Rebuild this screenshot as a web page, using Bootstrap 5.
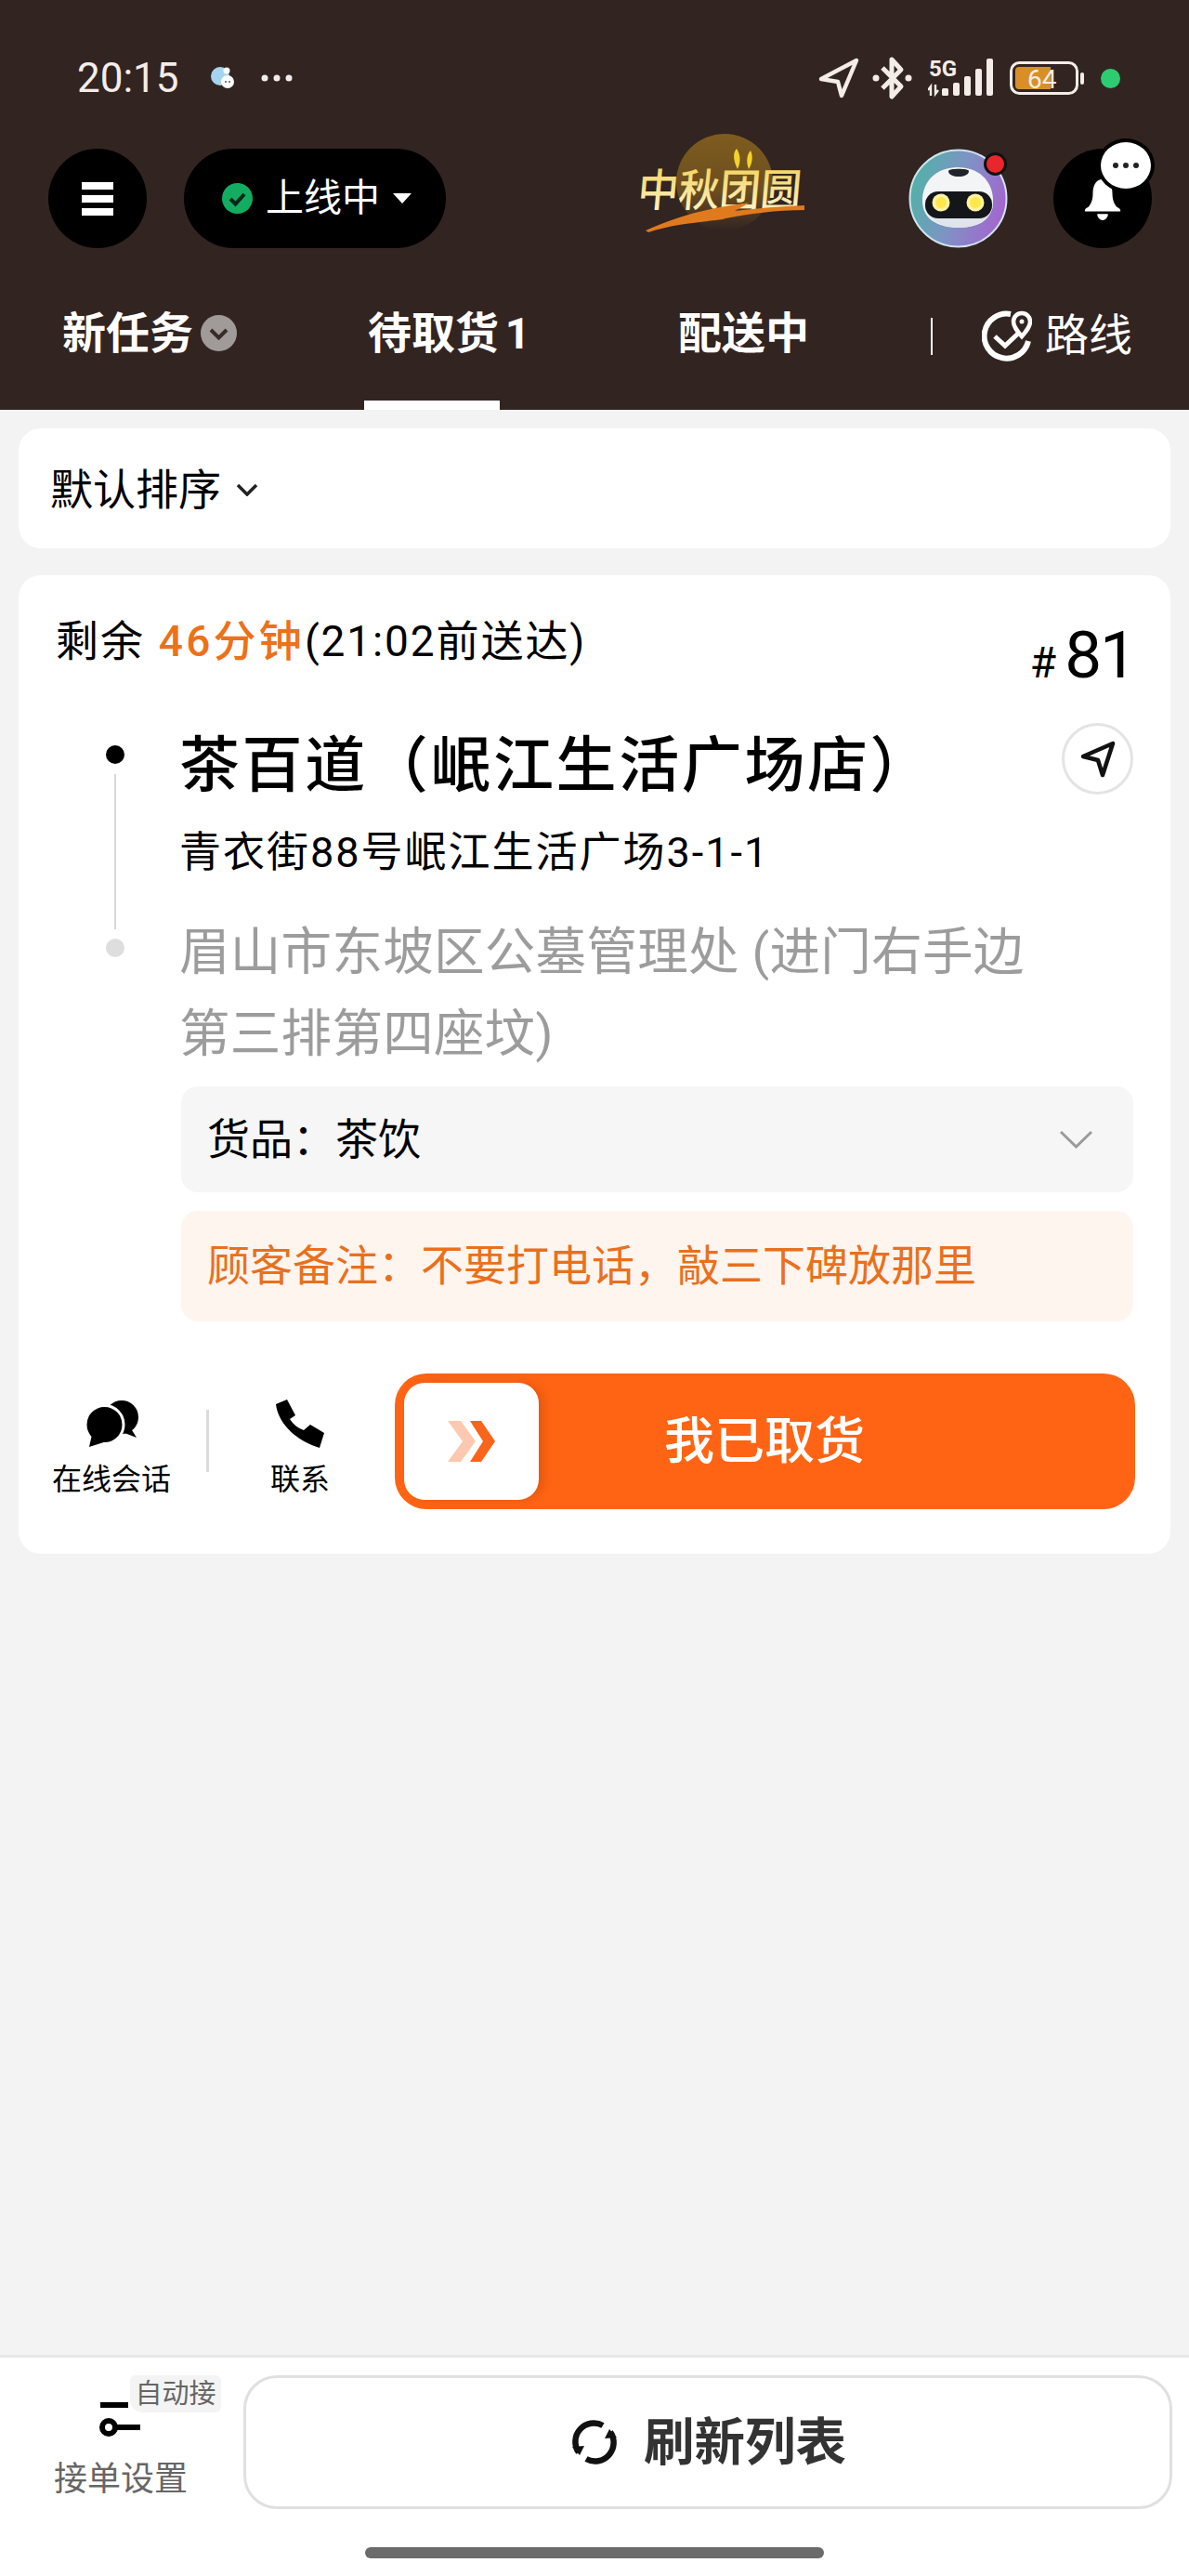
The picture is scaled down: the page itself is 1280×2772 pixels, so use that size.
<!DOCTYPE html>
<html lang="zh-CN">
<head>
  <meta charset="UTF-8">
  <title>待取货</title>
  <link href="https://cdn.jsdelivr.net/npm/bootstrap@5.3.3/dist/css/bootstrap.min.css" rel="stylesheet">
  <style>
    body { font-family: Roboto, "Noto Sans CJK SC", sans-serif; background: #f3f3f3; color: #000; overflow: hidden; }
    svg { display: block; flex: none; }

    /* 顶部 */
    .top-head { background: #322421; height: 441px; flex: none; color: #fff; }
    .stat-row { height: 60px; margin-top: 54px; padding: 0 74px 0 83px; color: #f3ece8; }
    .stat-time { font-size: 44px; line-height: 60px; width: 143px; }
    .stat-more { margin-left: 29px; }
    .stat-dot { width: 21px; height: 21px; background: #2ecc71; border-radius: 50%; margin-left: 16px; }
    .bar-row { height: 107px; margin-top: 46px; padding-left: 52px; }
    .round-btn { width: 106px; height: 107px; border-radius: 50%; background: #000; flex: none; }
    .status-pill { width: 282px; height: 107px; margin-left: 40px; border-radius: 54px; background: #000; padding-left: 41px; font-size: 41px; }
    .status-pill span { margin-left: 14px; line-height: 1; }
    .status-pill svg:last-child { margin-left: 14px; }
    .logo-box { width: 182px; height: 107px; margin-left: 204px; margin-top: -16px; margin-bottom: 16px; overflow: visible; }
    .robot-box { margin-left: 112px; position: relative; }
    .robot-dot { position: absolute; top: 4px; right: 1px; width: 25px; height: 25px; background: #e8262b; border: 3px solid #111; border-radius: 50%; }
    .bell-btn { margin-left: 49px; position: relative; }
    .bell-bubble { position: absolute; top: -11px; right: -3px; width: 54px; height: 50px; background: #fff; border: 4px solid #000; border-radius: 50%; box-sizing: content-box; }

    .tab-row { height: 174px; padding-left: 67px; font-size: 47px; font-weight: 700; line-height: 1; }
    .tab-one { padding-top: 8px; flex: none; white-space: nowrap; }
    .tab-down { margin-left: 8px; }
    .tab-active { width: 146px; margin-left: 137px; padding-left: 4px; box-shadow: inset 0 -10px 0 #fff; word-spacing: -5px; }
    .tab-send { margin-left: 192px; }
    .tab-sep { width: 2px; height: 40px; background: #fff; margin-left: 131px; margin-top: 8px; }
    .tab-route { margin-left: 53px; font-weight: 400; font-size: 47px; padding-top: 12px; }
    .tab-route span { margin-left: 14px; }

    /* 内容 */
    .list-area { padding: 20px 20px 0; }
    .white-box { background: #fff; border-radius: 24px; }
    .sort-box { height: 129px; padding: 3px 0 0 34px; font-size: 46px; }
    .sort-box svg { margin-left: 16px; }
    .task-box { height: 1053px; margin-top: 29px; padding: 41px 40px 48px 41px; }
    .left-time { font-size: 46px; line-height: 60px; letter-spacing: 1.9px; margin-left: -1px; }
    .left-time b { color: #ed7118; font-weight: 500; margin-left: 15px; letter-spacing: 3.2px; }
    .task-no { font-size: 71px; line-height: 90px; margin-right: -2px; letter-spacing: -2px; }
    .task-no small { font-size: 46px; margin-right: 9px; letter-spacing: 0; }
    .road-col { width: 126px; margin-right: 6px; padding-top: 24px; flex: none; }
    .road-dot { width: 20px; height: 20px; border-radius: 50%; background: #000; }
    .road-dot.far { background: #dedede; margin-top: 10px; }
    .road-line { width: 2px; height: 167px; background: #d8d8d8; margin-top: 11px; }
    .addr-col { width: 1027px; }
    .shop-name { font-size: 65px; line-height: 92px; font-weight: 500; margin: 0 0 -4px; white-space: nowrap; letter-spacing: 2.6px; }
    .nav-circle { width: 77px; height: 77px; border: 3px solid #e4e4e4; border-radius: 50%; flex: none; }
    .shop-addr { font-size: 45px; line-height: 60px; margin: 22px 0 0; white-space: nowrap; letter-spacing: 2px; }
    .to-addr { font-size: 54.5px; line-height: 88px; color: #9c9c9c; margin: 32px 0 0; letter-spacing: .3px; }
    .goods-box { height: 114px; margin: 13px 0 0 2px; padding: 0 43px 0 28px; background: #f6f6f6; border-radius: 18px; font-size: 46px; }
    .note-box { height: 119px; margin: 20px 0 0 2px; padding-left: 28px; background: #fff5ef; border-radius: 18px; font-size: 46px; color: #e9701d; }
    .act-row { height: 146px; margin-top: 56px; margin-left: -6px; }
    .act-item { padding-top: 28px; font-size: 32px; line-height: 40px; flex: none; }
    .act-item span { margin-top: 14px; }
    .act-chat { width: 130px; }
    .act-tel { width: 80px; margin-left: 58px; }
    .act-div { width: 3px; height: 67px; background: #dcdcdc; margin: 39px 0 0 37px; flex: none; }
    .slide-btn { margin: 0 -2px 0 62px; flex: 1; height: 146px; background: #ff6414; border-radius: 34px; padding-left: 10px; color: #fff; font-size: 54px; font-weight: 500; }
    .slide-knob { width: 145px; height: 126px; background: #fff; border-radius: 22px; box-shadow: 6px 0 10px rgba(190, 70, 0, .35); flex: none; }
    .slide-btn span { margin-left: 135px; }

    /* 底部 */
    .foot-bar { height: 238px; flex: none; background: #fff; border-top: 3px solid #e8e8e8; position: relative; }
    .foot-main { height: 166px; padding-top: 19px; }
    .set-col { width: 262px; flex: none; position: relative; font-size: 36px; color: #666; }
    .set-col svg { margin: 29px 0 0 105px; }
    .set-col .set-label { display: block; margin: 21px 0 0 58px; line-height: 48px; }
    .auto-tag { position: absolute; left: 140px; top: 0; width: 98px; height: 40px; background: #f4f4f4; font-size: 29px; line-height: 40px; text-align: center; border-radius: 6px 6px 6px 14px; color: #666; }
    .fresh-btn { width: 1000px; height: 144px; border: 3px solid #e0e0e0; border-radius: 36px; background: #fff; font-size: 54.500px; font-weight: 700; color: #333; padding: 0 0 0 350px; }
    .fresh-btn span { margin-left: 28px; line-height: 1; }
    .home-bar { width: 494px; height: 12px; background: #6b6b6b; border-radius: 6px; margin: 38px auto 0; }
  </style>
</head>
<body>
  <div class="vh-100 d-flex flex-column">

    <!-- 状态栏 + 顶部栏 -->
    <header class="top-head">
      <div class="stat-row d-flex align-items-center">
        <div class="stat-time">20:15</div>
        <svg width="26" height="24" viewBox="0 0 26 24"><circle cx="11" cy="10" r="10" fill="#a6d4ee"/><circle cx="19" cy="16" r="7" fill="#fff"/><circle cx="18" cy="4" r="3.5" fill="#fff"/><circle cx="17" cy="16" r="1" fill="#555"/><circle cx="21" cy="16" r="1" fill="#555"/></svg>
        <svg class="stat-more" width="34" height="8" viewBox="0 0 34 8" fill="#eee"><circle cx="4" cy="4" r="3.5"/><circle cx="17" cy="4" r="3.5"/><circle cx="30" cy="4" r="3.5"/></svg>
        <div class="ms-auto d-flex align-items-center">
          <svg width="44" height="46" viewBox="0 0 44 46" fill="none" stroke="#f3ece8" stroke-width="4.5" stroke-linejoin="round"><path d="M3 24 41 4 25 42 21 27z"/></svg>
          <svg style="margin-left:14px" width="44" height="48" viewBox="0 0 44 48" fill="none" stroke="#f3ece8" stroke-width="5" stroke-linejoin="round"><path d="M11 13 31 33 21 44V4L31 15 11 35"/><circle cx="4" cy="24" r="3.5" fill="#f3ece8" stroke="none"/><circle cx="39" cy="24" r="3.5" fill="#f3ece8" stroke="none"/></svg>
          <svg style="margin-left:16px" width="74" height="50" viewBox="0 -4 74 50">
            <text x="1" y="19" font-family="Roboto" font-weight="700" font-size="24" fill="#f3ece8">5G</text>
            <g transform="translate(0 -3)">
              <path d="M3 43V33L0 37M8 31V41L11 37" fill="none" stroke="#f3ece8" stroke-width="2.4"/>
              <g fill="#f3ece8"><rect x="15" y="35" width="7" height="8" rx="1.5"/><rect x="27" y="29" width="7" height="14" rx="2"/><rect x="39" y="22" width="7" height="21" rx="2"/><rect x="51" y="14" width="7" height="29" rx="2"/><rect x="63" y="3" width="7" height="40" rx="2"/></g>
            </g>
          </svg>
          <svg style="margin-left:14px" width="82" height="36" viewBox="0 0 82 36">
            <rect x="1.5" y="1.5" width="71" height="33" rx="9" fill="none" stroke="#f3ece8" stroke-width="3"/>
            <path d="M6 10a4 4 0 0 1 4-4H44V30H10a4 4 0 0 1-4-4z" fill="#d98f25"/>
            <text x="19" y="29" font-family="Roboto" font-size="28" fill="#f5eee8">64</text>
            <rect x="76" y="12" width="4" height="13" rx="2" fill="#f3ece8"/>
          </svg>
          <div class="stat-dot"></div>
        </div>
      </div>

      <div class="bar-row d-flex align-items-center">
        <div class="round-btn d-flex align-items-center justify-content-center">
          <svg width="34" height="36" viewBox="0 0 34 36" fill="#fff"><rect width="34" height="8"/><rect y="14" width="34" height="8"/><rect y="28" width="34" height="8"/></svg>
        </div>
        <div class="status-pill d-flex align-items-center">
          <svg width="33" height="33" viewBox="0 0 33 33"><circle cx="16.5" cy="16.5" r="16.5" fill="#12ad60"/><path d="M9 17l5.5 5.500L24 12" fill="none" stroke="#06251a" stroke-width="4"/></svg>
          <span>上线中</span>
          <svg width="20" height="11" viewBox="0 0 20 11" fill="#fff"><path d="M0 0H20L10 11z"/></svg>
        </div>
        <svg class="logo-box" viewBox="0 0 182 107">
          <defs>
            <linearGradient id="moon" x1="0" y1="0" x2="0" y2="1"><stop offset="0" stop-color="#7f5c1e"/><stop offset=".6" stop-color="#6b4d1f"/><stop offset="1" stop-color="#322421"/></linearGradient>
            <linearGradient id="gold" x1="0" y1="0" x2="0" y2="1"><stop offset="0" stop-color="#f2cb45"/><stop offset="1" stop-color="#fff8d8"/></linearGradient>
          </defs>
          <circle cx="96" cy="52" r="52" fill="url(#moon)"/>
          <path d="M110 38c-5-10-5-18-1-22 4 6 5 14 1 22zM122 38c-3-8-2-16 2-20 3 6 2 14-2 20z" fill="#f4d22c"/>
          <text x="0" y="78" transform="skewX(-5) translate(8 0)" font-family="Noto Sans CJK SC" font-weight="500" font-size="48" textLength="176" lengthAdjust="spacingAndGlyphs" fill="url(#gold)">中秋团圆</text>
          <path d="M11 104C50 86 90 78 123 74l-16 9c25-3 50-5 75-6v5c-30 0-60 4-85 9l-3 1C70 95 40 97 14 106z" fill="#e07a1e"/>
        </svg>
        <div class="robot-box">
          <svg width="107" height="107" viewBox="0 0 107 107">
            <defs><linearGradient id="ring" x1="0" y1=".3" x2="1" y2=".6"><stop offset="0" stop-color="#4fb3a8"/><stop offset=".5" stop-color="#7e93c4"/><stop offset="1" stop-color="#a564cf"/></linearGradient></defs>
            <circle cx="53.500" cy="53.500" r="52" fill="url(#ring)" stroke="#cfe4ec" stroke-width="2"/>
            <path d="M53 20c22 0 37 14 38 34 1 20-12 31-37 31S14 74 15 54c1-20 16-34 38-34z" fill="#f2f4f6"/>
            <path d="M17 62c3 14 18 23 37 23s34-9 37-23" fill="#dfe5ea"/>
            <rect x="18" y="46" width="72" height="29" rx="14" fill="#14161a"/>
            <path d="M43 24c0-3 22-3 22 0 0 8-22 8-22 0z" fill="#20242a"/>
            <circle cx="35" cy="58" r="9.500" fill="#fff2a0"/><circle cx="35" cy="58" r="6" fill="#ffe94a"/>
            <circle cx="72" cy="58" r="9.500" fill="#fff2a0"/><circle cx="72" cy="58" r="6" fill="#ffe94a"/>
          </svg>
          <div class="robot-dot"></div>
        </div>
        <div class="round-btn bell-btn d-flex align-items-center justify-content-center">
          <svg style="margin-top:2px" width="42" height="44" viewBox="0 0 42 46" fill="#fff"><path d="M21 0c-8 0-11 8-11 16 0 7-2 12-5 15-2 1-4 2-4 4v1h40v-1c0-2-2-3-4-4-3-3-5-8-5-15 0-8-3-16-11-16z"/><path d="M15 39h12c0 4-3 7-6 7s-6-3-6-7z"/></svg>
          <div class="bell-bubble d-flex align-items-center justify-content-center">
            <svg width="28" height="6" viewBox="0 0 28 6" fill="#222"><circle cx="3" cy="3" r="3"/><circle cx="14" cy="3" r="3"/><circle cx="25" cy="3" r="3"/></svg>
          </div>
        </div>
      </div>

      <nav class="tab-row d-flex">
        <div class="tab-one d-flex align-items-center">新任务
          <svg class="tab-down" width="39" height="39" viewBox="0 0 39 39"><circle cx="19.500" cy="19.500" r="19.500" fill="#a09a98"/><path d="M11 16l8.500 8.500L28 16" fill="none" stroke="#3a2b28" stroke-width="4"/></svg>
        </div>
        <div class="tab-one tab-active d-flex align-items-center">待取货 1</div>
        <div class="tab-one tab-send d-flex align-items-center">配送中</div>
        <div class="tab-one d-flex align-items-center"><div class="tab-sep"></div></div>
        <div class="tab-one tab-route d-flex align-items-center">
          <svg width="54" height="58" viewBox="0 0 54 58" fill="none" stroke="#fff" stroke-width="6"><path d="M31 7A24 24 0 1 0 50 36"/><path d="M14 31l11 10 16-15" stroke-width="5"/><path d="M43 31c-6-7-9-11-9-16a9 9 0 0 1 18 0c0 5-3 9-9 16z" stroke-width="4.500"/><circle cx="43" cy="15" r="2.500" fill="#fff" stroke="none"/></svg>
          <span>路线</span>
        </div>
      </nav>
    </header>

    <main class="list-area flex-grow-1">
      <div class="white-box sort-box d-flex align-items-center">
        默认排序
        <svg width="24" height="14" viewBox="0 0 24 14" fill="none" stroke="#222" stroke-width="3.500"><path d="M2 2l10 10L22 2"/></svg>
      </div>

      <section class="white-box task-box">
        <div class="d-flex justify-content-between align-items-start">
          <div class="left-time">剩余<b>46分钟</b>(21:02前送达)</div>
          <div class="task-no"><small>#</small>81</div>
        </div>
        <div class="d-flex mt-3 pt-1">
          <div class="road-col d-flex flex-column align-items-center">
            <div class="road-dot"></div>
            <div class="road-line"></div>
            <div class="road-dot far"></div>
          </div>
          <div class="addr-col">
            <div class="d-flex justify-content-between align-items-start">
              <h1 class="shop-name">茶百道（岷江生活广场店）</h1>
              <div class="nav-circle d-flex align-items-center justify-content-center">
                <svg width="38" height="40" viewBox="0 0 38 40" fill="none" stroke="#111" stroke-width="4.500" stroke-linejoin="round"><path d="M3 17 35 3 24 37 19 21z"/></svg>
              </div>
            </div>
            <p class="shop-addr">青衣街88号岷江生活广场3-1-1</p>
            <p class="to-addr">眉山市东坡区公墓管理处 (进门右手边<br>第三排第四座坟)</p>
            <div class="goods-box d-flex align-items-center justify-content-between">
              <span>货品&#xFF1A;茶饮</span>
              <svg width="37" height="20" viewBox="0 0 37 20" fill="none" stroke="#9a9a9a" stroke-width="3"><path d="M2 2l16.500 16L35 2"/></svg>
            </div>
            <div class="note-box d-flex align-items-center">顾客备注&#xFF1A;不要打电话&#xFF0C;敲三下碑放那里</div>
          </div>
        </div>
        <div class="act-row d-flex align-items-start">
          <div class="act-item act-chat d-flex flex-column align-items-center">
            <svg width="58" height="52" viewBox="0 0 58 52">
              <circle cx="40" cy="19" r="18" fill="#000"/><path d="M48 28 56 41 38 34z" fill="#000"/>
              <circle cx="21.500" cy="27" r="20.500" fill="#000" stroke="#fff" stroke-width="3"/>
              <path d="M8 38 5 51 24 45z" fill="#000"/>
            </svg>
            <span>在线会话</span>
          </div>
          <div class="act-div"></div>
          <div class="act-item act-tel d-flex flex-column align-items-center">
            <svg width="52" height="52" viewBox="0 0 52 52" fill="#000"><path d="M0 5 12 0l9 17-6 4c3 5 9 10 15 12l7-6 15 9-5 16C16 42 2 22 0 5z"/></svg>
            <span>联系</span>
          </div>
          <div class="slide-btn d-flex align-items-center">
            <div class="slide-knob d-flex align-items-center justify-content-center">
              <svg width="52" height="44" viewBox="0 0 52 44"><path d="M0 0H14L30 22 14 44H0L16 22z" fill="#fcc9b0"/><path d="M24 0H36L51 22 36 44H24L38 22z" fill="#f9651a"/></svg>
            </div>
            <span>我已取货</span>
          </div>
        </div>
      </section>
    </main>

    <footer class="foot-bar">
      <div class="foot-main d-flex">
        <div class="set-col">
          <svg width="48" height="38" viewBox="0 0 48 38" fill="#000"><rect x="3" y="0" width="30" height="6"/><circle cx="12" cy="27" r="7" fill="#fff" stroke="#000" stroke-width="6"/><rect x="18" y="24" width="28" height="6"/></svg>
          <span class="set-label">接单设置</span>
          <div class="auto-tag">自动接</div>
        </div>
        <button type="button" class="fresh-btn d-flex align-items-center">
          <svg width="50" height="50" viewBox="0 0 50 50" fill="none" stroke="#111" stroke-width="6.500"><path d="M8 36A20 20 0 0 1 34 7"/><path d="M42 14A20 20 0 0 1 16 43"/><path d="M1 30l8 9 5-10z" fill="#111" stroke="none"/><path d="M49 20l-8-9-5 10z" fill="#111" stroke="none"/></svg>
          <span>刷新列表</span>
        </button>
      </div>
      <div class="home-bar"></div>
    </footer>
  </div>
</body>
</html>
